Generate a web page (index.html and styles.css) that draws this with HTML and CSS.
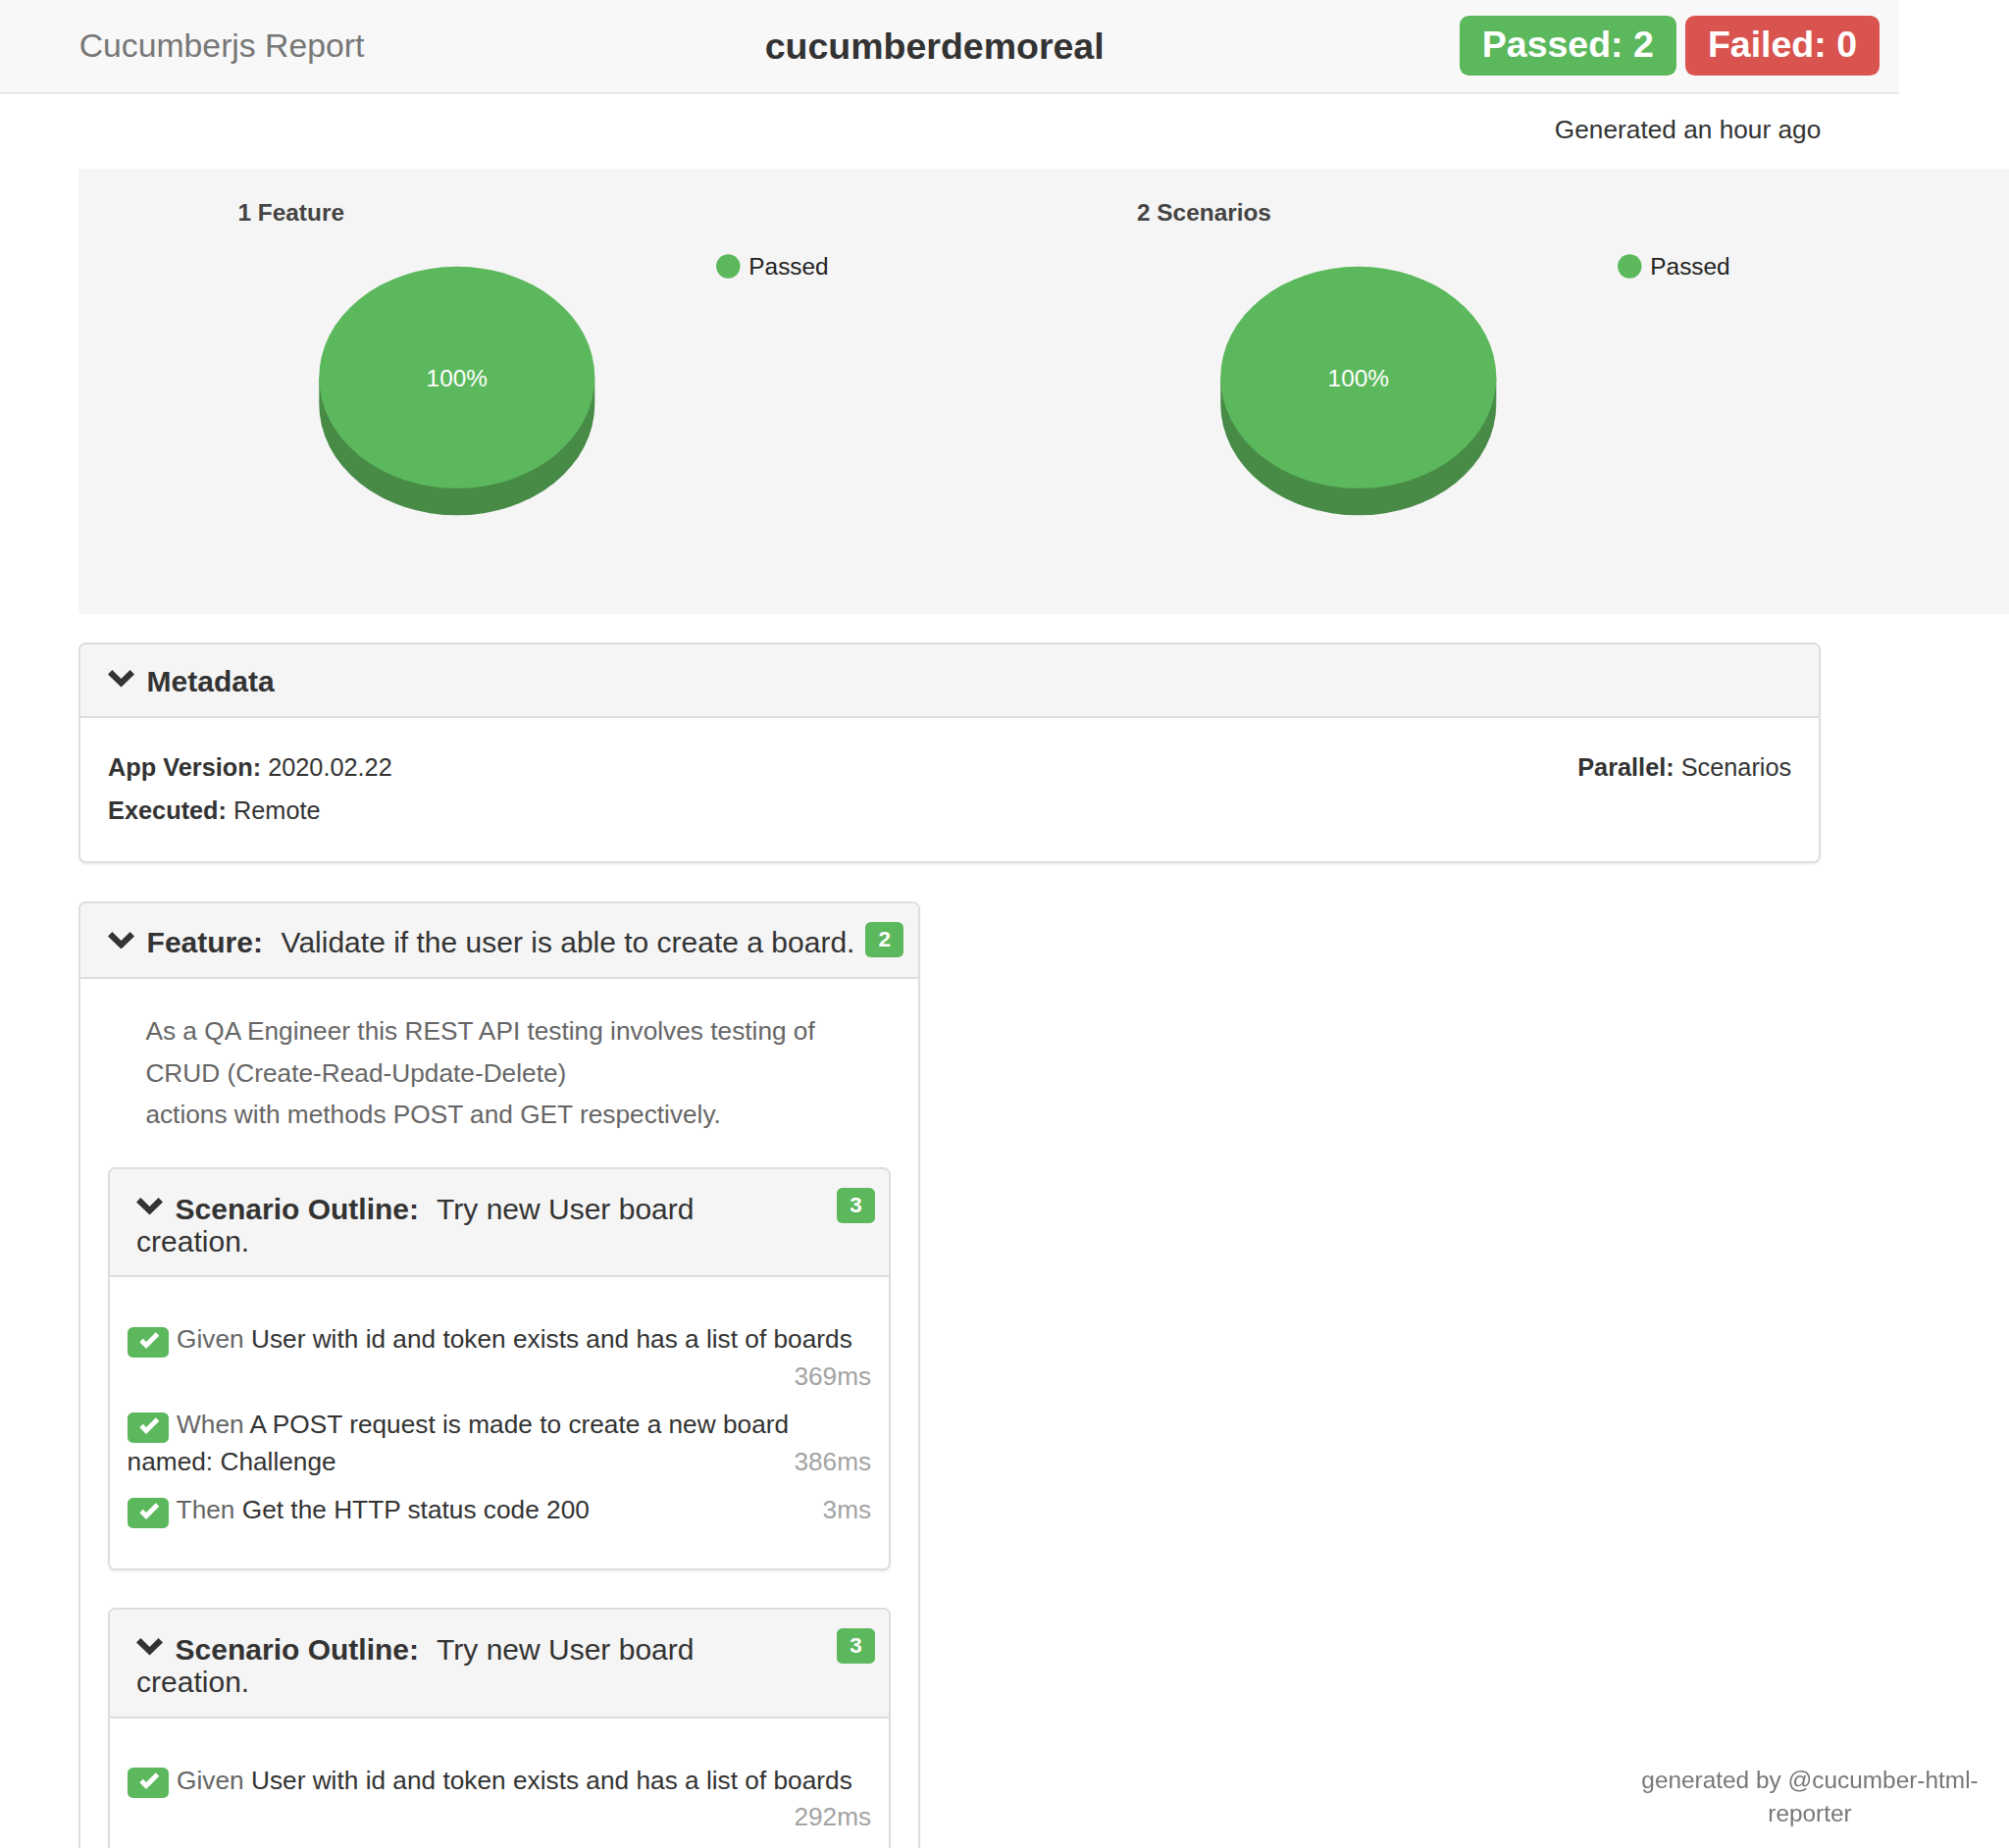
FILE: index.html
```html
<!DOCTYPE html>
<html lang="en">
<head>
<meta charset="utf-8">
<title>Cucumberjs Report</title>
<link rel="stylesheet" href="styles.css">
</head>
<body>
<header class="navbar">
  <div class="brand">Cucumberjs Report</div>
  <div class="project">cucumberdemoreal</div>
  <div class="totals">
    <span class="total total-passed">Passed: 2</span>
    <span class="total total-failed">Failed: 0</span>
  </div>
</header>

<main class="page">
  <div class="generated">Generated an hour ago</div>

  <section class="charts">
    <div class="chart">
      <svg width="919" height="454" viewBox="0 0 919 454">
        <text class="chart-title" x="161.5" y="52.8">1 Feature</text>
        <path class="pie-side" d="M244.3 212.8 L244.3 240.3 A140.5 113 0 0 0 525.3 240.3 L525.3 212.8 Z"/>
        <ellipse class="pie-top" cx="384.8" cy="212.8" rx="140.5" ry="113"/>
        <text class="pie-label" x="384.8" y="221.8">100%</text>
        <circle class="legend-dot" cx="661.3" cy="99.5" r="12.2"/>
        <text class="legend-text" x="682.3" y="107.8">Passed</text>
      </svg>
    </div>
    <div class="chart">
      <svg width="919" height="454" viewBox="0 0 919 454">
        <text class="chart-title" x="159" y="52.8">2 Scenarios</text>
        <path class="pie-side" d="M244.3 212.8 L244.3 240.3 A140.5 113 0 0 0 525.3 240.3 L525.3 212.8 Z"/>
        <ellipse class="pie-top" cx="384.8" cy="212.8" rx="140.5" ry="113"/>
        <text class="pie-label" x="384.8" y="221.8">100%</text>
        <circle class="legend-dot" cx="661.3" cy="99.5" r="12.2"/>
        <text class="legend-text" x="682.3" y="107.8">Passed</text>
      </svg>
    </div>
  </section>

  <section class="panel metadata">
    <div class="panel-heading">
      <h4 class="panel-title meta-title"><svg class="chevron" width="27" height="17.5" viewBox="0 0 27 17.5"><polygon points="0,4.4 4.4,0 13.5,9.1 22.6,0 27,4.4 13.5,17.5"/></svg><b>Metadata</b></h4>
    </div>
    <div class="meta-body">
      <div class="meta-col">
        <div><b>App Version:</b> 2020.02.22</div>
        <div><b>Executed:</b> Remote</div>
      </div>
      <div class="meta-col">
        <div><b>Parallel:</b> Scenarios</div>
      </div>
    </div>
  </section>

  <section class="panel feature">
    <div class="panel-heading feature-heading">
      <h4 class="panel-title feature-title"><svg class="chevron" width="27" height="17.5" viewBox="0 0 27 17.5"><polygon points="0,4.4 4.4,0 13.5,9.1 22.6,0 27,4.4 13.5,17.5"/></svg><b class="kw">Feature:</b>&nbsp; Validate if the user is able to create a board.</h4>
      <span class="badge">2</span>
    </div>
    <div class="feature-body">
      <p class="feature-desc">As a QA Engineer this REST API testing involves testing of<br>CRUD (Create-Read-Update-Delete)<br>actions with methods POST and GET respectively.</p>

      <div class="panel scenario">
        <div class="panel-heading scenario-heading">
          <h4 class="panel-title scenario-title"><svg class="chevron" width="27" height="17.5" viewBox="0 0 27 17.5"><polygon points="0,4.4 4.4,0 13.5,9.1 22.6,0 27,4.4 13.5,17.5"/></svg><b class="kw">Scenario Outline:</b>&nbsp; Try new User board creation.</h4>
          <span class="badge">3</span>
        </div>
        <div class="scenario-body">
          <div class="step"><span class="step-status"><svg width="42.7" height="31" viewBox="0 0 42.7 31"><polygon points="19,22 12.3,15.3 15.8,11.8 19,15 28.8,5.2 32.3,8.7"/></svg></span> <span class="keyword">Given</span> User with id and token exists and has a list of boards<span class="duration">369ms</span></div>
          <div class="step"><span class="step-status"><svg width="42.7" height="31" viewBox="0 0 42.7 31"><polygon points="19,22 12.3,15.3 15.8,11.8 19,15 28.8,5.2 32.3,8.7"/></svg></span> <span class="keyword">When</span> A POST request is made to create a new board named: Challenge<span class="duration">386ms</span></div>
          <div class="step"><span class="step-status"><svg width="42.7" height="31" viewBox="0 0 42.7 31"><polygon points="19,22 12.3,15.3 15.8,11.8 19,15 28.8,5.2 32.3,8.7"/></svg></span> <span class="keyword">Then</span> Get the HTTP status code 200<span class="duration">3ms</span></div>
        </div>
      </div>

      <div class="panel scenario">
        <div class="panel-heading scenario-heading">
          <h4 class="panel-title scenario-title"><svg class="chevron" width="27" height="17.5" viewBox="0 0 27 17.5"><polygon points="0,4.4 4.4,0 13.5,9.1 22.6,0 27,4.4 13.5,17.5"/></svg><b class="kw">Scenario Outline:</b>&nbsp; Try new User board creation.</h4>
          <span class="badge">3</span>
        </div>
        <div class="scenario-body">
          <div class="step"><span class="step-status"><svg width="42.7" height="31" viewBox="0 0 42.7 31"><polygon points="19,22 12.3,15.3 15.8,11.8 19,15 28.8,5.2 32.3,8.7"/></svg></span> <span class="keyword">Given</span> User with id and token exists and has a list of boards<span class="duration">292ms</span></div>
          <div class="step"><span class="step-status"><svg width="42.7" height="31" viewBox="0 0 42.7 31"><polygon points="19,22 12.3,15.3 15.8,11.8 19,15 28.8,5.2 32.3,8.7"/></svg></span> <span class="keyword">When</span> A POST request is made to create a new board named: Challenge<span class="duration">351ms</span></div>
          <div class="step"><span class="step-status"><svg width="42.7" height="31" viewBox="0 0 42.7 31"><polygon points="19,22 12.3,15.3 15.8,11.8 19,15 28.8,5.2 32.3,8.7"/></svg></span> <span class="keyword">Then</span> Get the HTTP status code 200<span class="duration">2ms</span></div>
        </div>
      </div>
    </div>
  </section>
</main>

<footer class="credit">generated by @cucumber-html-reporter</footer>
</body>
</html>
```

FILE: styles.css
```css
* {
  box-sizing: border-box;
}

html {
  height: 1884px;
  overflow: hidden;
}

body {
  margin: 0;
  font-family: "Liberation Sans", Arial, Helvetica, sans-serif;
  font-size: 26.25px;
  line-height: 37.5px;
  color: #333;
  background: #fff;
}

/* ---------- navbar ---------- */
.navbar {
  display: flex;
  align-items: center;
  width: 1936px;
  height: 96.4px;
  background: #f8f8f8;
  border-bottom: 2px solid #e7e7e7;
}

.brand {
  flex: 0 0 779.7px;
  padding-left: 80.7px;
  font-size: 33.75px;
  line-height: 37.5px;
  color: #777;
}

.project {
  font-size: 37.5px;
  line-height: 41.25px;
  font-weight: bold;
  color: #333;
}

.totals {
  display: flex;
  gap: 9px;
  margin-left: auto;
  margin-right: 20px;
  align-self: flex-start;
  margin-top: 15.7px;
}

.total {
  font-size: 37.5px;
  line-height: 37.5px;
  font-weight: bold;
  color: #fff;
  padding: 11px 23px 12.5px;
  border-radius: 9.4px;
}

.total-passed {
  background: #5cb85c;
}

.total-failed {
  background: #d9534f;
}

/* ---------- page ---------- */
.page {
  margin-left: 80px;
  width: 1776.3px;
}

.generated {
  text-align: right;
  margin-top: 17.8px;
  color: #333;
}

/* ---------- charts ---------- */
.charts {
  display: flex;
  width: 1968px;
  height: 454px;
  margin-top: 20.5px;
  background: #f5f5f5;
}

.chart {
  flex: 0 0 919px;
  height: 454px;
}

.chart:first-child {
  margin-left: 0.7px;
}

.chart svg {
  display: block;
}

.chart text {
  font-family: "Liberation Sans", Arial, sans-serif;
  font-size: 24.4px;
}

.chart-title {
  font-weight: bold;
  fill: #444;
}

.pie-side {
  fill: #478b47;
}

.pie-top {
  fill: #5cb85c;
}

.pie-label {
  fill: #fff;
  text-anchor: middle;
}

.legend-dot {
  fill: #5cb85c;
}

.legend-text {
  fill: #222;
}

/* ---------- panels ---------- */
.panel {
  background: #fff;
  border: 2px solid #ddd;
  border-radius: 7.5px;
  box-shadow: 0 1.875px 1.875px rgba(0, 0, 0, 0.05);
}

.panel-heading {
  background: #f5f5f5;
  border-bottom: 2px solid #ddd;
  border-radius: 5.6px 5.6px 0 0;
  padding: 18.75px 28.1px;
}

.panel-title {
  margin: 0;
  padding-top: 4.85px;
  font-size: 30px;
  line-height: 33px;
  font-weight: normal;
  color: #333;
}

.panel-title b {
  font-weight: bold;
}

.panel-title .kw {
  margin-right: 2px;
}

.meta-title {
  padding-top: 2px;
}

.chevron {
  vertical-align: 4px;
  margin-right: 12.5px;
  fill: #333;
}

.metadata {
  margin-top: 29px;
}

.meta-body {
  display: flex;
  justify-content: space-between;
  padding: 28.1px 28.1px 30px;
  font-size: 25.3px;
  line-height: 44px;
  color: #333;
}

/* ---------- feature ---------- */
.feature {
  margin-top: 39px;
  width: 858.3px;
}

.feature-heading {
  display: flex;
  align-items: flex-start;
}

.feature-title {
  flex: none;
  white-space: nowrap;
}

.badge {
  flex: 0 0 auto;
  display: inline-block;
  font-size: 22.5px;
  line-height: 22.5px;
  font-weight: bold;
  color: #fff;
  background: #5cb85c;
  padding: 7.3px 13px 6.2px;
  border-radius: 5.6px;
}

.feature-heading .badge {
  margin-left: 11px;
}

.feature-body {
  padding: 32.1px 28.1px 28.1px;
}

.feature-desc {
  margin: 0 0 32.2px;
  padding-left: 38.3px;
  line-height: 42.5px;
  color: #666;
}

/* ---------- scenarios ---------- */
.scenario {
  margin-bottom: 38.5px;
}

.scenario-heading {
  display: flex;
  align-items: flex-start;
  justify-content: space-between;
  padding-left: 27px;
  padding-right: 14.4px;
}

.scenario-title {
  width: 650px;
}

.scenario-body {
  padding: 45px 18px 28.1px 17.5px;
}

.step {
  display: flow-root;
  margin-bottom: 12px;
  color: #333;
}

.step-status {
  display: inline-block;
  width: 42.7px;
  height: 31px;
  margin-right: 0.5px;
  vertical-align: -9.5px;
  background: #5cb85c;
  border-radius: 5.6px;
}

.step-status svg {
  display: block;
  fill: #fff;
}

.keyword {
  color: #666;
}

.duration {
  float: right;
  color: #a3a3a3;
}

/* ---------- footer ---------- */
.credit {
  position: fixed;
  right: 18px;
  bottom: 19px;
  width: 370px;
  text-align: center;
  font-size: 24.4px;
  line-height: 33.4px;
  color: #777;
}
```
